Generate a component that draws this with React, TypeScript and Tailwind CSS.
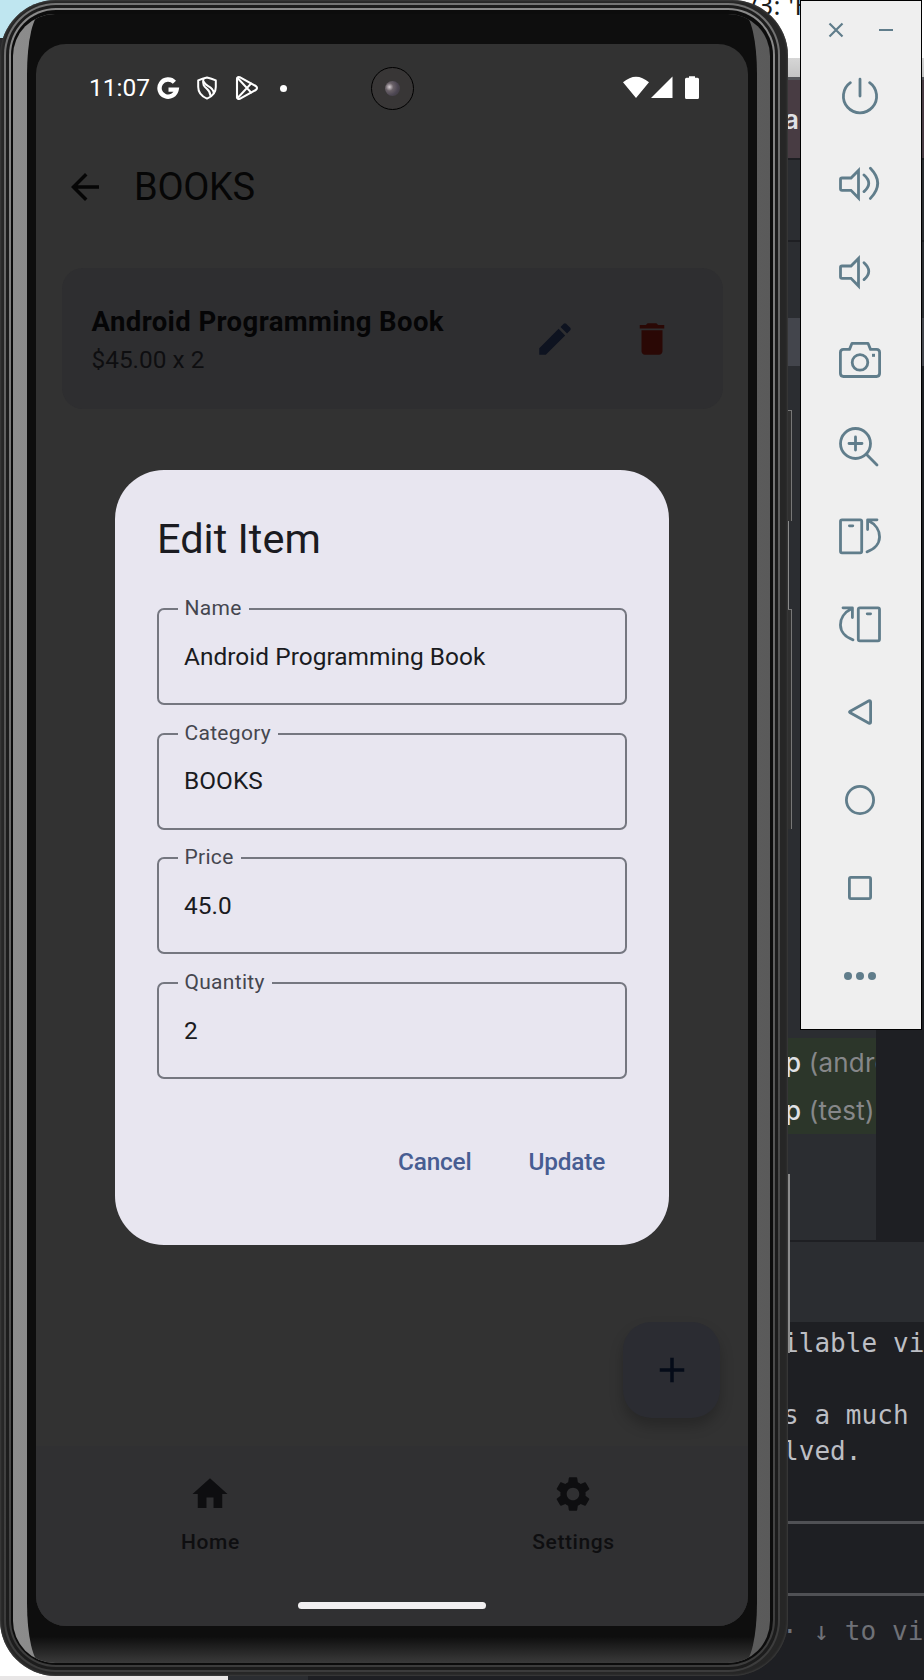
import type { ReactNode } from "react";
import { MdAdd, MdArrowBack, MdDelete, MdEdit, MdHome, MdSettings } from "react-icons/md";

const FIELDS = [
  { label: "Name", value: "Android Programming Book" },
  { label: "Category", value: "BOOKS" },
  { label: "Price", value: "45.0" },
  { label: "Quantity", value: "2" },
];

function Desktop() {
  return (
    <div className="flex h-full w-full flex-col bg-[#1e1f23]">
      <div className="flex h-[1676px]">
        <div className="flex w-[300px] flex-col">
          <div className="h-[38px] bg-[#bfe6f0]" />
          <div className="h-[1200px] bg-[#2a2a2c]" />
          <div className="flex-1 bg-white" />
        </div>
        <div className="flex flex-1 flex-col overflow-hidden">
          <div className="flex h-[58px] items-start bg-white pl-[448px] whitespace-nowrap">
            <span className="-mt-[10px] font-['Noto_Sans',sans-serif] text-[26px] leading-[30px] tracking-[0.5px] text-[#1b1b1b]">
              /3: 'H
            </span>
          </div>
          <div className="h-[19px] bg-gradient-to-b from-[#d6d6d6] to-[#c4c4c4]" />
          <div className="h-[3px] bg-[#55565a]" />
          <div className="flex h-[78px] items-center bg-[#483c43] pl-[484px] font-['Inter',sans-serif] text-[26px] font-semibold text-[#dfe1e5]">
            a
          </div>
          <div className="h-[2px] bg-[#1e1f23]" />
          <div className="h-[80px] bg-[#2b2d31]" />
          <div className="h-[2px] bg-[#1e1f23]" />
          <div className="h-[76px] bg-[#2b2d31]" />
          <div className="h-[48px] bg-[#43454c]" />
          <div className="flex h-[874px]">
            <div className="flex w-[576px] flex-col bg-[#2b2d31]">
              <div className="h-[672px]" />
              <div className="flex h-[96px] flex-col overflow-hidden bg-[#2c362a] pt-px pl-[485px] font-['Inter',sans-serif] text-[26px] leading-[48px] tracking-[0.2px] whitespace-nowrap text-[#868789]">
                <p className="h-[48px]">
                  <span className="font-medium text-[#dfe1e5]">p</span> (andro
                </p>
                <p className="h-[48px]">
                  <span className="font-medium text-[#dfe1e5]">p</span> (test)
                </p>
              </div>
              <div className="flex-1" />
            </div>
            <div className="flex-1 bg-[#1e1f23]" />
          </div>
          <div className="h-[2px] bg-[#1e1f23]" />
          <div className="h-[80px] bg-[#2b2d31]" />
          <div className="flex flex-col pt-[3px] pl-[483px] font-['DejaVu_Sans_Mono',monospace] text-[26px] leading-[36px] tracking-[0.05px] whitespace-pre text-[#bcbec4]">
            <p className="h-[36px]">ilable vi</p>
            <p className="h-[36px]"> </p>
            <p className="h-[36px]">s a much </p>
            <p className="h-[36px]">lved.</p>
          </div>
          <div className="mt-[52px] h-[75px] border-y-3 border-[#505155]" />
          <div className="pt-[17px] pl-[482px] font-['DejaVu_Sans_Mono',monospace] text-[26px] leading-[36px] tracking-[0.05px] whitespace-pre text-[#6f7177]">
            · ↓ to vi
          </div>
        </div>
      </div>
      <div className="flex h-[4px]">
        <div className="w-[228px] bg-[#e8e6e6]" />
        <div className="w-[80px] bg-[#2b2d31]" />
        <div className="flex-1 bg-[#1e1f23]" />
      </div>
    </div>
  );
}

function StatusBar() {
  return (
    <div className="flex h-[88px] shrink-0 items-center pl-[53px] text-white">
      <span className="w-[67px] text-[24.5px] leading-none">11:07</span>
      <svg className="h-[24px] w-[24px]" viewBox="-12 -12 24 24">
        <path d="M6.4 -5.8A8.6 8.6 0 1 0 8.6 1.6H0.5" fill="none" stroke="currentColor" strokeWidth="4.4" />
      </svg>
      <svg className="ml-[15px] h-[24px] w-[24px]" viewBox="-12 -12 24 24" fill="none" stroke="currentColor" strokeWidth="2" strokeLinejoin="round" strokeLinecap="round">
        <path d="M0 -10.4Q-4.5 -9.4 -8.8 -7.6V-1Q-8.8 7 0 10.6Q8.8 7 8.8 -1V-7.6Q4.5 -9.4 0 -10.4Z" />
        <path d="M-3.6 -9C-6 1 3.4 -0.6 3.4 7.6" />
        <path d="M-3 -6C-2 -1.6 6 -2 6.6 4.4" />
      </svg>
      <svg className="ml-[16px] h-[26px] w-[24px]" viewBox="-12 -13 24 26" fill="none" stroke="currentColor" strokeWidth="2.1" strokeLinejoin="round" strokeLinecap="round">
        <path d="M-10 -9.5Q-9.4 -11.6 -7.3 -10.8L8.8 -2Q11.2 0 8.8 2L-7.3 10.8Q-9.4 11.6 -10 9.5Z" />
        <path d="M-9.4 -10L4 4.4M-9.4 10L4 -4.4" />
      </svg>
      <span className="ml-[21px] h-[7px] w-[7px] rounded-full bg-white" />
      <span className="ml-[84px] flex h-[43px] w-[43px] items-center justify-center rounded-full border border-black bg-[#383636]">
        <span className="h-[15px] w-[15px] rounded-full bg-[radial-gradient(circle_at_30%_40%,#d8d0d4_0%,#6a6268_28%,#4c4652_60%,#3a3739_100%)]" />
      </span>
      <svg className="ml-[209px] h-[24px] w-[78px]" viewBox="0 0 78 24" fill="currentColor">
        <path d="M0 6.3Q13 -5 26 6.3L13 22ZM28 22L49.5 0.5V22Z" />
        <path d="M66 1.8V0.3H72V1.8H74.5Q76 1.8 76 3.3V21.5Q76 23 74.5 23H63.5Q62 23 62 21.5V3.3Q62 1.8 63.5 1.8Z" />
      </svg>
    </div>
  );
}

function EditDialog() {
  return (
    <div className="absolute top-[426px] left-[79px] flex h-[775px] w-[554px] flex-col rounded-[49px] bg-[#e8e6f0] px-[42px] text-[#1a1b21]">
      <h2 className="mt-[41px] h-[56px] text-[41.5px] leading-[56px]">Edit Item</h2>
      <div className="mt-[41px] flex flex-col gap-[27.7px]">
        {FIELDS.map((f) => (
          <div key={f.label} className="relative flex h-[97px] items-center rounded-[7px] border-2 border-[#757780] pt-px pl-[25px]">
            <span className="absolute -top-[15px] left-[19px] bg-[#e8e6f0] pr-[7px] pl-[6.5px] text-[21px] leading-[26px] tracking-[0.3px] text-[#45464f]">
              {f.label}
            </span>
            <span className="text-[24.4px] leading-none tracking-[0.05px]">{f.value}</span>
          </div>
        ))}
      </div>
      <div className="mt-[65px] flex justify-end gap-[57px] pr-[22px] text-[24.4px] leading-[36px] font-medium tracking-[-0.2px] text-[#475d92]">
        <button>Cancel</button>
        <button>Update</button>
      </div>
    </div>
  );
}

function Screen() {
  return (
    <div className="relative flex h-[1582px] w-[712px] flex-col overflow-hidden rounded-[30px] bg-[#323232] font-['Roboto',sans-serif]">
      <StatusBar />
      <div className="flex h-[110px] shrink-0 items-center pl-[28px] text-[#060606]">
        <MdArrowBack className="size-[42px]" />
        <h1 className="ml-[28px] text-[38px] leading-none tracking-[-0.3px]">BOOKS</h1>
      </div>
      <div className="mr-[25px] ml-[26px] mt-[26px] flex h-[141px] shrink-0 items-center rounded-[21px] bg-[#2e2e30] pl-[29.5px]">
        <div className="flex w-[426px] flex-col pt-[4px]">
          <p className="text-[27.5px] leading-[38px] font-bold tracking-[0.4px] text-[#050506]">Android Programming Book</p>
          <p className="text-[24.4px] leading-[38px] tracking-[0px] text-[#0e0e10]">$45.00 x 2</p>
        </div>
        <MdEdit className="ml-[16.5px] size-[42px] text-[#0e1320]" />
        <MdDelete className="ml-[55px] size-[42px] text-[#2a0805]" />
      </div>
      <div className="flex flex-1 items-end justify-end pr-[28px] pb-[28px]">
        <div className="flex h-[96px] w-[97px] items-center justify-center rounded-[28px] bg-[#2b2c32] shadow-[0_8px_14px_0_rgba(0,0,0,0.22)]">
          <MdAdd className="size-[42px] text-[#050b18]" />
        </div>
      </div>
      <div className="flex h-[180px] shrink-0 flex-col bg-[#303032] text-[#0e0e10]">
        <div className="flex h-[156px] justify-center gap-[15px] text-[21px] leading-[26px] font-medium tracking-[0.6px]">
          <div className="flex w-[348px] flex-col items-center pt-[27px]">
            <MdHome className="mr-[2px] size-[42px]" />
            <span className="mt-[14px]">Home</span>
          </div>
          <div className="flex w-[348px] flex-col items-center pt-[27px]">
            <MdSettings className="mr-[2px] size-[42px]" />
            <span className="mt-[14px]">Settings</span>
          </div>
        </div>
        <div className="ml-[262px] h-[7px] w-[188px] rounded-full bg-[#f1eff1]" />
      </div>
      <EditDialog />
    </div>
  );
}

function Phone() {
  return (
    <div className="absolute top-0 left-0 flex">
      <div className="h-[1676px] w-[788px] rounded-[56px] bg-[#262626] pt-[3px] pr-[8px] pb-[4px] pl-[4px] shadow-[inset_0_0_2px_1px_#3c3c3c]">
        <div className="h-full w-full rounded-[52px] bg-gradient-to-b from-[#747474] via-[#505050] to-[#3c3c3c] p-[2px]">
          <div className="h-full w-full rounded-[50px] bg-[#1c1c1c] p-[3px]">
            <div className="h-full w-full rounded-[47px] bg-gradient-to-b from-[#8a8a8a] via-[#666666] to-[#3c3c3c] p-[2px]">
              <div className="h-full w-full rounded-[45px] bg-[#0c0c0c] px-[2px] pt-[4px] pb-[2px]">
                <div className="mr-px flex h-full overflow-hidden rounded-[42px] bg-gradient-to-r from-[#8c8c8c] via-[#777777] to-[#5a5a5a] pl-[14px]">
                  <div className="h-full w-[730px] rounded-[14px_14px_14px_14px/60px_60px_60px_60px] bg-[linear-gradient(180deg,#0e0e0e_0%,#0e0e0e_98.4%,#3a3a3a_100%)] pt-[30px] pl-[9px]">
                    <Screen />
                  </div>
                </div>
              </div>
            </div>
          </div>
        </div>
      </div>
      <div className="flex w-[5px] flex-col pt-[410px]">
        <div className="h-[111px] w-[4px] border-t border-r border-[#777777] bg-[#303030]" />
        <div className="h-[88px] w-px bg-[#8a8a8a]" />
        <div className="h-[220px] w-[4px] border-t border-r border-[#777777] bg-[#303030]" />
        <div className="mt-[345px] h-[179px] w-[2px] bg-[#8c8c8c]" />
      </div>
    </div>
  );
}

function ToolIcon({ children }: { children: ReactNode }) {
  return (
    <svg className="h-[48px] w-[48px]" viewBox="-24 -24 48 48" fill="none" stroke="currentColor" strokeWidth="2.8" strokeLinecap="round" strokeLinejoin="round">
      {children}
    </svg>
  );
}

const SPEAKER = "M-19.5 -4.6Q-19.5 -6 -18 -6H-9L-1.5 -13.6V14L-9 6.3H-18Q-19.5 6.3 -19.5 4.8Z";

function RotateShapes() {
  return (
    <>
      <rect x="-19.5" y="-16.2" width="21.2" height="33" rx="1.5" />
      <path d="M-10.6 -10.2H-7.2M7 15.8C23.5 10.5 23.5 -8 8.5 -15.2M7.6 -6.5V-16.2H17" />
    </>
  );
}

function Toolbar() {
  return (
    <div className="absolute top-0 left-[800px] flex h-[1030px] w-[122px] flex-col items-center border border-black bg-[#efefef] text-[#607d8b]">
      <svg className="mt-[20px] mr-[-6px] h-[18px] w-[72px]" viewBox="0 0 72 18" fill="none" stroke="currentColor" strokeWidth="2.2">
        <path d="M1.5 2.5L14.5 15.5M14.5 2.5L1.5 15.5M51 9H65" />
      </svg>
      <div className="mt-[33px] ml-[-2px] flex flex-col gap-[40px]">
        <ToolIcon>
          <path d="M-9.6 -13.3A16.6 16.6 0 1 0 9.6 -13.3M0 -16.8V0" />
        </ToolIcon>
        <ToolIcon>
          <path d={SPEAKER} strokeLinejoin="miter" />
          <path d="M4 -9Q13.5 -0.8 4 7.6M10.4 -15.8Q25 -0.8 10.4 14.4" />
        </ToolIcon>
        <ToolIcon>
          <path d={SPEAKER} strokeLinejoin="miter" />
          <path d="M4 -9.3Q13.5 -0.8 4 7.6" />
        </ToolIcon>
        <ToolIcon>
          <path d="M-16.5 -10.6H-10.5L-8 -16.7H8L10.5 -10.6H16.5Q19.6 -10.6 19.6 -7.5V13.3Q19.6 16.5 16.5 16.5H-16.5Q-19.6 16.5 -19.6 13.3V-7.5Q-19.6 -10.6 -16.5 -10.6Z" />
          <circle cx="0" cy="2.4" r="7.8" />
          <rect x="12" y="-6.2" width="3" height="3" fill="currentColor" stroke="none" />
        </ToolIcon>
        <ToolIcon>
          <circle cx="-4.5" cy="-4.5" r="15" />
          <path d="M6.6 6.6L17 17M-11 -4.5H2M-4.5 -11V2" />
        </ToolIcon>
        <ToolIcon>
          <RotateShapes />
        </ToolIcon>
        <ToolIcon>
          <g transform="scale(-1 1)">
            <RotateShapes />
          </g>
        </ToolIcon>
        <ToolIcon>
          <path d="M-10.2 -0.5Q-10.8 0 -10.2 0.5L9 11.2Q10.6 11.8 10.6 10V-10Q10.6 -11.8 9 -11.2Z" />
        </ToolIcon>
        <ToolIcon>
          <circle cx="0" cy="0" r="13.6" />
        </ToolIcon>
        <ToolIcon>
          <rect x="-10.6" y="-10.6" width="21.2" height="21.2" rx="1.5" />
        </ToolIcon>
        <ToolIcon>
          <g fill="currentColor" stroke="none">
            <circle cx="-12" cy="0" r="4" />
            <circle cx="0" cy="0" r="4" />
            <circle cx="12" cy="0" r="4" />
          </g>
        </ToolIcon>
      </div>
    </div>
  );
}

export default function App() {
  return (
    <div className="relative h-[1680px] w-[924px] overflow-hidden">
      <Desktop />
      <Phone />
      <Toolbar />
    </div>
  );
}
